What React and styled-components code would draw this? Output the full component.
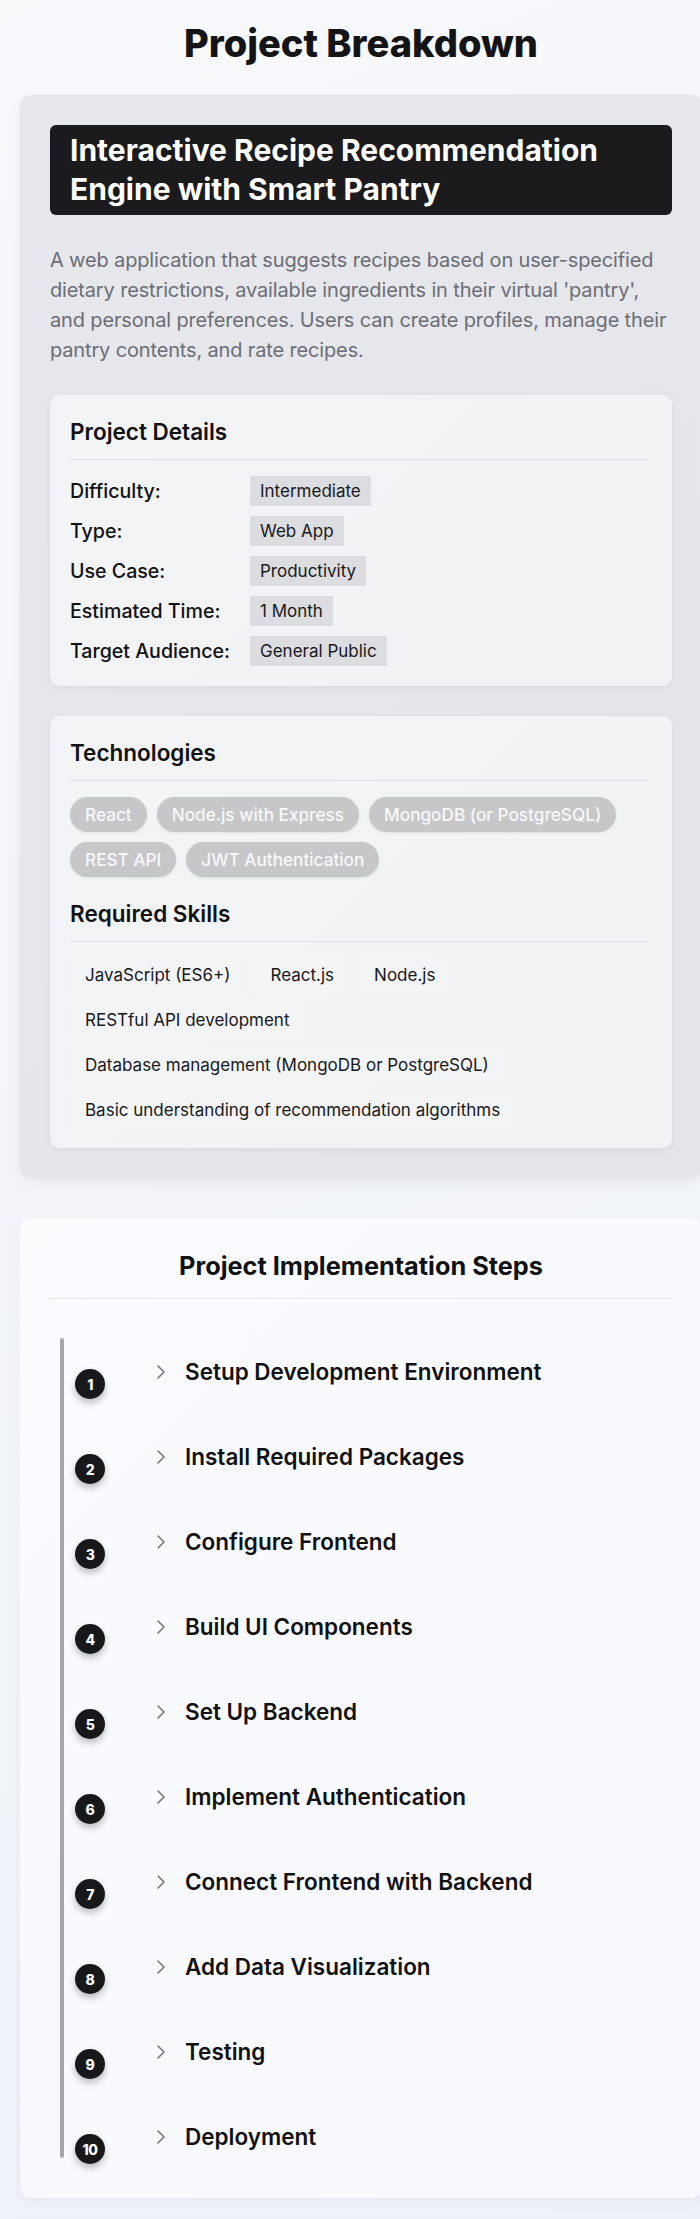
import React from 'react';
import styled, { createGlobalStyle } from 'styled-components';
import { ChevronRight } from 'lucide-react';

const project = {
    title: 'Interactive Recipe Recommendation Engine with Smart Pantry',
    description: "A web application that suggests recipes based on user-specified dietary restrictions, available ingredients in their virtual 'pantry', and personal preferences. Users can create profiles, manage their pantry contents, and rate recipes.",
    details: [
        ['Difficulty:', 'Intermediate'],
        ['Type:', 'Web App'],
        ['Use Case:', 'Productivity'],
        ['Estimated Time:', '1 Month'],
        ['Target Audience:', 'General Public'],
    ],
    technologies: ['React', 'Node.js with Express', 'MongoDB (or PostgreSQL)', 'REST API', 'JWT Authentication'],
    skills: [
        'JavaScript (ES6+)',
        'React.js',
        'Node.js',
        'RESTful API development',
        'Database management (MongoDB or PostgreSQL)',
        'Basic understanding of recommendation algorithms',
    ],
    steps: [
        'Setup Development Environment',
        'Install Required Packages',
        'Configure Frontend',
        'Build UI Components',
        'Set Up Backend',
        'Implement Authentication',
        'Connect Frontend with Backend',
        'Add Data Visualization',
        'Testing',
        'Deployment',
    ],
};

const App = () => {
    return (
        <>
            <GlobalStyle />
            <Page>
                <PageTitle>Project Breakdown</PageTitle>

                <Breakdown>
                    <TitleBar>{project.title}</TitleBar>
                    <Description>{project.description}</Description>

                    <Panel>
                        <PanelTitle>Project Details</PanelTitle>
                        <DetailList>
                            {project.details.map(([label, value]) => (
                                <DetailRow key={label}>
                                    <Label>{label}</Label>
                                    <Badge>{value}</Badge>
                                </DetailRow>
                            ))}
                        </DetailList>
                    </Panel>

                    <Panel>
                        <PanelTitle>Technologies</PanelTitle>
                        <PillWrap>
                            {project.technologies.map(t => <Pill key={t}>{t}</Pill>)}
                        </PillWrap>
                        <PanelTitle $spaced>Required Skills</PanelTitle>
                        <SkillWrap>
                            {project.skills.map(s => <Skill key={s}>{s}</Skill>)}
                        </SkillWrap>
                    </Panel>
                </Breakdown>

                <StepsCard>
                    <StepsTitle>Project Implementation Steps</StepsTitle>
                    <Timeline>
                        <Rail />
                        <StepList>
                            {project.steps.map((s, i) => (
                                <Step key={s}>
                                    <Circle>{i + 1}</Circle>
                                    <StepHeader>
                                        <ChevronRight size={24} strokeWidth={1.6} color="#76767c" />
                                        <StepTitle>{s}</StepTitle>
                                    </StepHeader>
                                </Step>
                            ))}
                        </StepList>
                    </Timeline>
                </StepsCard>
            </Page>
        </>
    );
};

export default App;

const GlobalStyle = createGlobalStyle`
    html, body{
        margin:0;
        padding:0;
    }
    html{
        background: linear-gradient(160deg, #f8f9fb 0%, #f1f4f9 60%, #eef2f8 100%);
        min-height:100%;
    }
    body{
        font-family: Inter, "Noto Sans", sans-serif;
        color:#111113;
        overflow-x:hidden;
    }
    *{
        box-sizing:border-box;
    }
`

const Page = styled.div`
    width:722px;
    padding:21px 20px 20px;
`

const PageTitle = styled.h1`
    margin:0 0 30px;
    font-size:38px;
    line-height:44px;
    font-weight:800;
    text-align:center;
    color:#141416;
`

const Breakdown = styled.section`
    background: linear-gradient(135deg, #e6e8eb 0%, #e3e5e9 100%);
    border-radius:10px;
    padding:30px;
    box-shadow:0 4px 14px rgba(0,0,0,0.06);
`

const TitleBar = styled.h2`
    margin:0 0 30px;
    padding:6px 20px;
    background:#1b1b1d;
    color:#fff;
    border-radius:6px;
    font-size:30px;
    line-height:39px;
    font-weight:700;
`

const Description = styled.p`
    margin:0 0 30px;
    font-size:20px;
    line-height:30px;
    letter-spacing:-0.15px;
    color:#6c6d76;
`

const Panel = styled.div`
    background: linear-gradient(135deg, #f3f4f6 0%, #f1f2f4 100%);
    border-radius:10px;
    padding:20px;
    box-shadow:0 2px 8px rgba(0,0,0,0.05);
    & + &{
        margin-top:30px;
    }
`

const PanelTitle = styled.h3`
    margin:${p => p.$spaced ? '20px' : '0'} 0 16px;
    padding-bottom:11px;
    border-bottom:1px solid #dfe1e5;
    font-size:22.5px;
    line-height:33px;
    font-weight:600;
    color:#111113;
`

const DetailList = styled.div`
    display:flex;
    flex-direction:column;
    gap:10px;
`

const DetailRow = styled.div`
    display:grid;
    grid-template-columns:180px auto;
    justify-items:start;
    align-items:center;
`

const Label = styled.span`
    font-size:19.6px;
    font-weight:500;
`

const Badge = styled.span`
    background:#dcdde0;
    padding:5px 10px;
    font-size:17px;
    line-height:20px;
    color:#18181a;
`

const PillWrap = styled.div`
    display:flex;
    flex-wrap:wrap;
    gap:10px 10px;
`

const Pill = styled.span`
    background:#c7c7c9;
    color:#f8f8f8;
    border-radius:999px;
    padding:7px 15px;
    font-size:17.2px;
    line-height:21px;
    font-weight:500;
    box-shadow:0 1px 3px rgba(0,0,0,0.08);
`

const SkillWrap = styled.div`
    display:flex;
    flex-wrap:wrap;
    gap:10px;
`

const Skill = styled.span`
    padding:5px 15px;
    font-size:17px;
    line-height:25px;
    background:rgba(255,255,255,0.12);
    border-radius:6px;
    color:#18181a;
`

const StepsCard = styled.section`
    margin-top:40px;
    background: linear-gradient(135deg, #fafbfd 0%, #f7f9fd 100%);
    border-radius:12px;
    padding:30px 30px 40px;
    box-shadow:0 4px 14px rgba(0,0,0,0.04);
`

const StepsTitle = styled.h2`
    margin:0 0 39px;
    padding:3px 0 18px;
    border-bottom:1px solid #e2e4e9;
    font-size:25.3px;
    line-height:29px;
    font-weight:700;
    text-align:center;
`

const Timeline = styled.div`
    display:flex;
    margin-left:10px;
`

const Rail = styled.div`
    width:4px;
    flex-shrink:0;
    background:#a7a7a9;
    border-radius:2px;
`

const StepList = styled.div`
    flex:1;
    display:flex;
    flex-direction:column;
    gap:30px;
`

const Step = styled.div`
    height:55px;
    display:flex;
    align-items:flex-start;
    padding-top:17px;
`

const Circle = styled.div`
    width:30px;
    height:30px;
    flex-shrink:0;
    margin:14px 0 0 11px;
    border-radius:50%;
    background:#18181a;
    color:#fff;
    display:grid;
    place-items:center;
    font-size:14px;
    font-weight:800;
    letter-spacing:-0.5px;
    box-shadow:0 4px 7px rgba(0,0,0,0.25);
`

const StepHeader = styled.div`
    display:flex;
    align-items:center;
    gap:12px;
    margin-left:44px;
`

const StepTitle = styled.span`
    font-size:22.5px;
    line-height:33px;
    font-weight:600;
    color:#111113;
`
